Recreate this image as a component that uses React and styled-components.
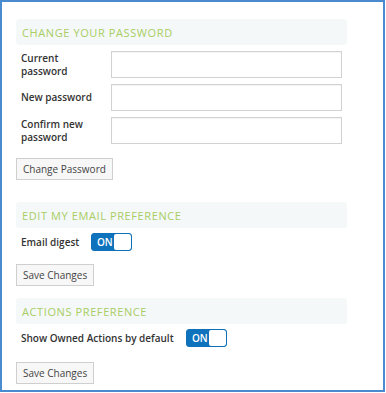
import React from 'react'
import styled, { createGlobalStyle } from 'styled-components'

const GlobalStyle = createGlobalStyle`
*{
  margin: 0;
  padding: 0;
  box-sizing: border-box;
}
body{
  background: #fff;
  font-family: 'Open Sans', 'Liberation Sans', sans-serif;
}
`

const Frame = styled.div`
width: 385px;
height: 392px;
border: 2px solid #4a8bd0;
padding: 17px 0 0 14px;
background: #fff;
`

const Section = styled.div`
display: flex;
flex-direction: column;
align-items: flex-start;
margin-top: ${p => p.gap || 0}px;
`

const Heading = styled.div`
width: 331px;
height: 26px;
border-radius: 3px;
background: #f4f8f9;
color: #a9cd62;
font-size: 11px;
letter-spacing: 0.6px;
display: flex;
align-items: center;
padding-left: 6px;
`

const FormGrid = styled.div`
display: grid;
grid-template-columns: 95px 231px;
row-gap: 6px;
margin-top: 6px;
`

const Label = styled.label`
font-size: 10px;
font-weight: 600;
color: #333;
line-height: 13px;
padding-left: 5px;
display: flex;
align-items: center;
`

const Input = styled.input`
height: 27px;
border: 1px solid #d2d2d2;
box-shadow: inset 0 1px 1px rgba(0,0,0,0.05);
`

const Button = styled.button`
margin-top: ${p => p.top}px;
height: 22px;
padding: 0 6px;
border: 1px solid #cfcfcf;
background: #f7f7f7;
color: #444;
font-family: 'Open Sans', 'Liberation Sans', sans-serif;
font-size: 10px;
`

const Row = styled.div`
display: flex;
align-items: center;
margin-top: 5px;
height: 18px;
`

const RowLabel = styled(Label)`
width: ${p => p.w}px;
`

const Toggle = styled.div`
width: 41px;
height: 18px;
border-radius: 3px;
border: 1px solid #0f6fb8;
background: #0f72bd;
display: flex;
align-items: center;
justify-content: space-between;
overflow: hidden;
`

const ToggleText = styled.span`
color: #fff;
font-size: 10px;
font-weight: 600;
padding-left: 5px;
`

const Knob = styled.span`
width: 17px;
height: 16px;
background: #fff;
border-radius: 2px;
`

const Switch = () => (
  <Toggle>
    <ToggleText>ON</ToggleText>
    <Knob />
  </Toggle>
)

export default function App() {
  return (
    <Frame>
      <GlobalStyle />

      <Section>
        <Heading>CHANGE YOUR PASSWORD</Heading>
        <FormGrid>
          <Label>Current<br />password</Label>
          <Input type="password" />
          <Label>New password</Label>
          <Input type="password" />
          <Label>Confirm new<br />password</Label>
          <Input type="password" />
        </FormGrid>
        <Button top={14}>Change Password</Button>
      </Section>

      <Section gap={22}>
        <Heading>EDIT MY EMAIL PREFERENCE</Heading>
        <Row>
          <RowLabel w={75}>Email digest</RowLabel>
          <Switch />
        </Row>
        <Button top={13}>Save Changes</Button>
      </Section>

      <Section gap={12}>
        <Heading>ACTIONS PREFERENCE</Heading>
        <Row>
          <RowLabel w={170}>Show Owned Actions by default</RowLabel>
          <Switch />
        </Row>
        <Button top={15}>Save Changes</Button>
      </Section>
    </Frame>
  )
}
